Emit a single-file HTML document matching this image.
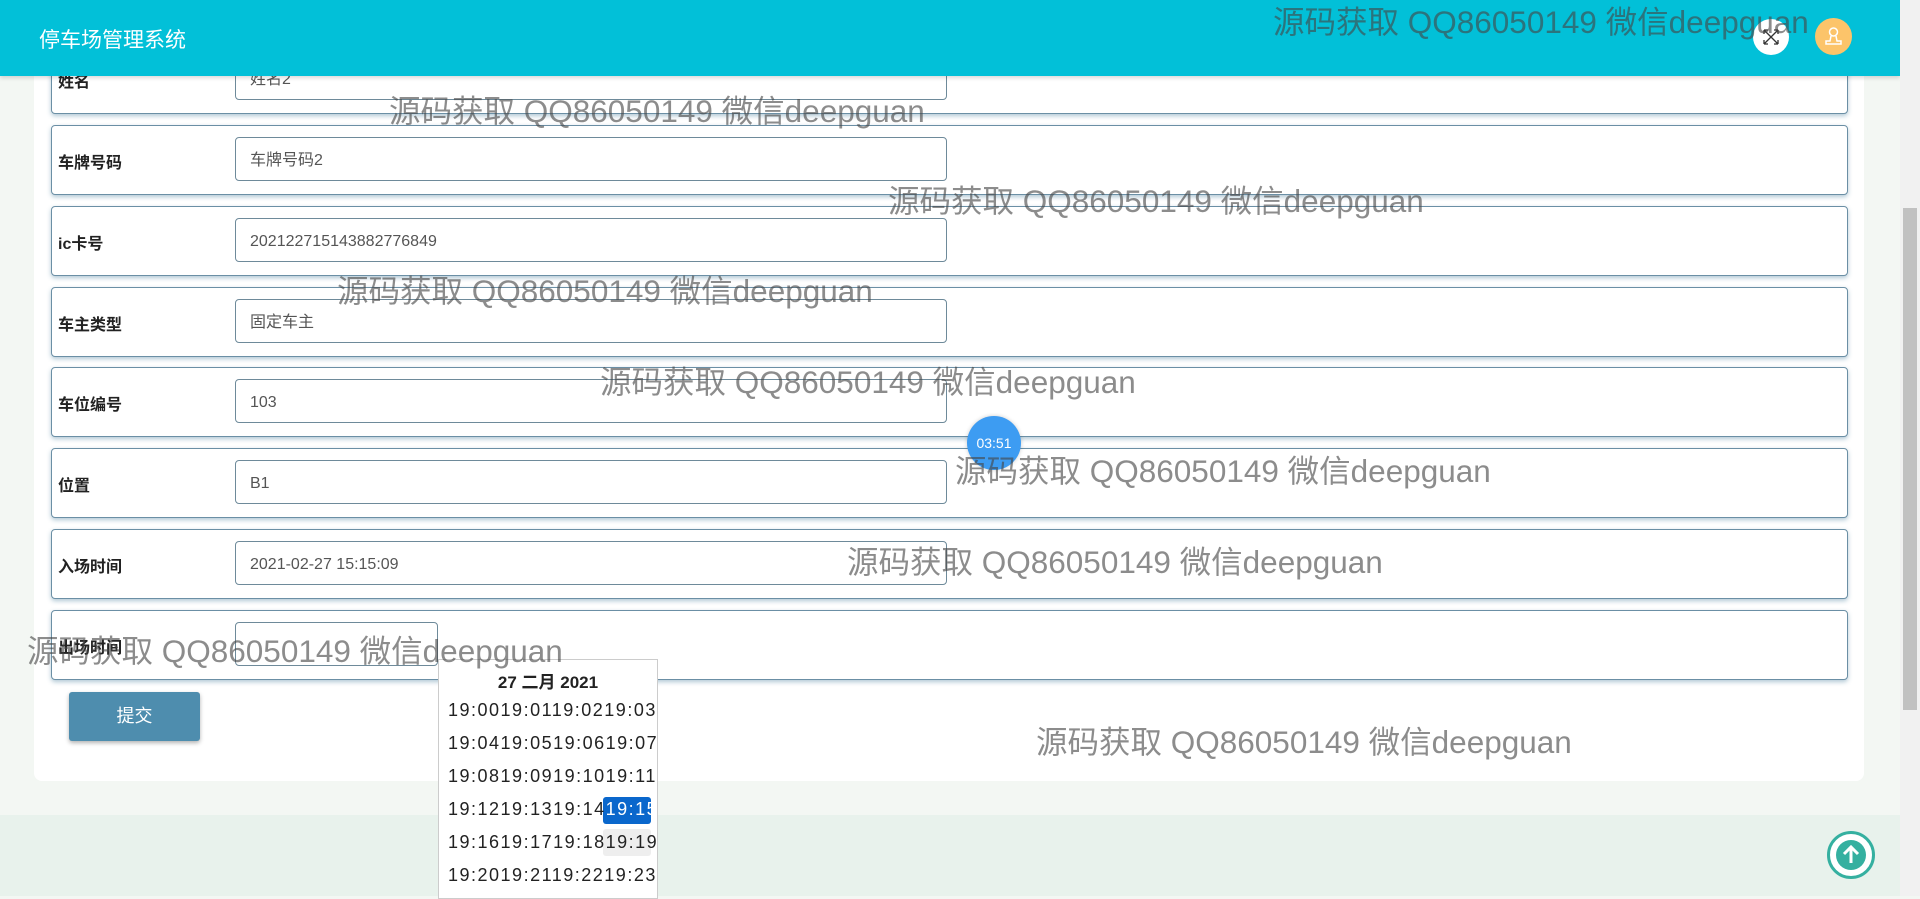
<!DOCTYPE html>
<html><head><meta charset="utf-8"><style>
*{box-sizing:border-box;margin:0;padding:0}
body{width:1920px;height:896px;overflow:hidden;background:#f3f7f3;font-family:"Liberation Sans","Noto Sans CJK SC",sans-serif;position:relative}
.bottom{position:absolute;left:0;top:815px;width:1900px;height:81px;background:#e8f2ec}
.card{position:absolute;left:34px;top:40px;width:1830px;height:741px;background:#fff;border-radius:8px}
.row{position:absolute;left:51px;width:1797px;height:70px;border:1.5px solid #6b8fa5;border-radius:4px;background:#fff;box-shadow:0 2px 5px rgba(80,130,160,.45)}
.row label{position:absolute;left:6px;top:23px;font-size:16px;font-weight:bold;color:#222}
.row .in{position:absolute;left:183px;top:11px;width:712px;height:44px;border:1px solid #6e8a9a;border-radius:4px;padding-left:14px;line-height:46px;font-size:16px;color:#555}
.hdr{position:absolute;left:0;top:0;width:1900px;height:76px;background:#02c0d8;box-shadow:0 2px 4px rgba(0,0,0,.15)}
.hdr .t{position:absolute;left:39px;top:24px;color:#fff;font-size:21px}
.wm{position:absolute;font-size:31.5px;color:rgba(70,70,70,.62);white-space:nowrap;line-height:36px}
.sb{position:absolute;left:1900px;top:0;width:20px;height:896px;background:#f1f1f1}
.thumb{position:absolute;left:1903px;top:208px;width:14px;height:502px;background:#c1c1c1}
.btn{position:absolute;left:69px;top:692px;width:131px;height:49px;background:#4e8dae;border-radius:3px;color:#fff;font-size:18px;text-align:center;line-height:49px;box-shadow:0 2px 4px rgba(0,0,0,.3)}
.dp{position:absolute;left:438px;top:659px;width:220px;height:240px;background:#fff;border:1px solid #ccc;font-size:18px;color:#222;overflow:hidden}
.dp .h{text-align:center;font-weight:bold;margin-top:8px;font-size:17px}
.dp .r{position:absolute;left:9px;white-space:nowrap;letter-spacing:1.5px}
</style></head><body>
<div class="bottom"></div>
<div class="card"></div>
<div class="row" style="top:44px"><label>姓名</label><div class="in">姓名2</div></div>
<div class="row" style="top:125px"><label>车牌号码</label><div class="in">车牌号码2</div></div>
<div class="row" style="top:206px"><label>ic卡号</label><div class="in">202122715143882776849</div></div>
<div class="row" style="top:287px"><label>车主类型</label><div class="in">固定车主</div></div>
<div class="row" style="top:367px"><label>车位编号</label><div class="in">103</div></div>
<div class="row" style="top:448px"><label>位置</label><div class="in">B1</div></div>
<div class="row" style="top:529px"><label>入场时间</label><div class="in">2021-02-27 15:15:09</div></div>
<div class="row" style="top:610px"><label>出场时间</label><div class="in" style="width:203px"></div></div>
<div class="btn">提交</div>
<div class="dp"><div class="h">27 二月 2021</div>
<div style="position:absolute;left:164px;top:137px;width:48px;height:27px;background:#0a67cc;border-radius:3px"></div>
<div style="position:absolute;left:164px;top:169px;width:48px;height:27px;background:#eee;border-radius:3px"></div>
<div class="r" style="top:40px">19:0019:0119:0219:03</div>
<div class="r" style="top:73px">19:0419:0519:0619:07</div>
<div class="r" style="top:106px">19:0819:0919:1019:11</div>
<div class="r" style="top:139px">19:1219:1319:14<span style="color:#fff">19:15</span></div>
<div class="r" style="top:172px">19:1619:1719:1819:19</div>
<div class="r" style="top:205px">19:2019:2119:2219:23</div>
</div>
<div style="position:absolute;left:967px;top:416px;width:54px;height:54px;border-radius:50%;background:#3d9cf2;color:#fff;font-size:14px;text-align:center;line-height:54px;box-shadow:0 0 4px rgba(0,0,0,.2)">03:51</div>
<div style="position:absolute;left:1827px;top:831px;width:48px;height:48px;border-radius:50%;border:3px solid #35b0a0;background:#fff"><svg width="42" height="42" viewBox="0 0 42 42"><circle cx="21" cy="21" r="15" fill="#35b0a0"/><path d="M21 29V14M14 20l7-7 7 7" stroke="#fff" stroke-width="3" fill="none"/></svg></div>
<div class="hdr"><div class="t">停车场管理系统</div>
<div style="position:absolute;left:1753px;top:19px;width:36px;height:36px;border-radius:50%;background:#fff"><svg width="36" height="36" viewBox="0 0 36 36"><path d="M11 11l14 14M25 11L11 25M11 11h4M11 11v4M25 11h-4M25 11v4M11 25h4M11 25v-4M25 25h-4M25 25v-4" stroke="#333" stroke-width="1.3" fill="none"/></svg></div>
<div style="position:absolute;left:1815px;top:18px;width:37px;height:37px;border-radius:50%;background:#fcc46a"><svg width="37" height="37" viewBox="0 0 37 37"><circle cx="18.5" cy="14" r="4" stroke="#fff" stroke-width="1.5" fill="none"/><path d="M16 18l-1 5h-4v3h15v-3h-4l-1-5" stroke="#fff" stroke-width="1.5" fill="none"/></svg></div>
</div>
<div class="wm" style="left:1273px;top:4px">源码获取 QQ86050149 微信deepguan</div>
<div class="wm" style="left:389px;top:93px">源码获取 QQ86050149 微信deepguan</div>
<div class="wm" style="left:888px;top:183px">源码获取 QQ86050149 微信deepguan</div>
<div class="wm" style="left:337px;top:273px">源码获取 QQ86050149 微信deepguan</div>
<div class="wm" style="left:600px;top:364px">源码获取 QQ86050149 微信deepguan</div>
<div class="wm" style="left:955px;top:453px">源码获取 QQ86050149 微信deepguan</div>
<div class="wm" style="left:847px;top:544px">源码获取 QQ86050149 微信deepguan</div>
<div class="wm" style="left:27px;top:633px">源码获取 QQ86050149 微信deepguan</div>
<div class="wm" style="left:1036px;top:724px">源码获取 QQ86050149 微信deepguan</div>
<div class="sb"></div><div class="thumb"></div>
</body></html>
